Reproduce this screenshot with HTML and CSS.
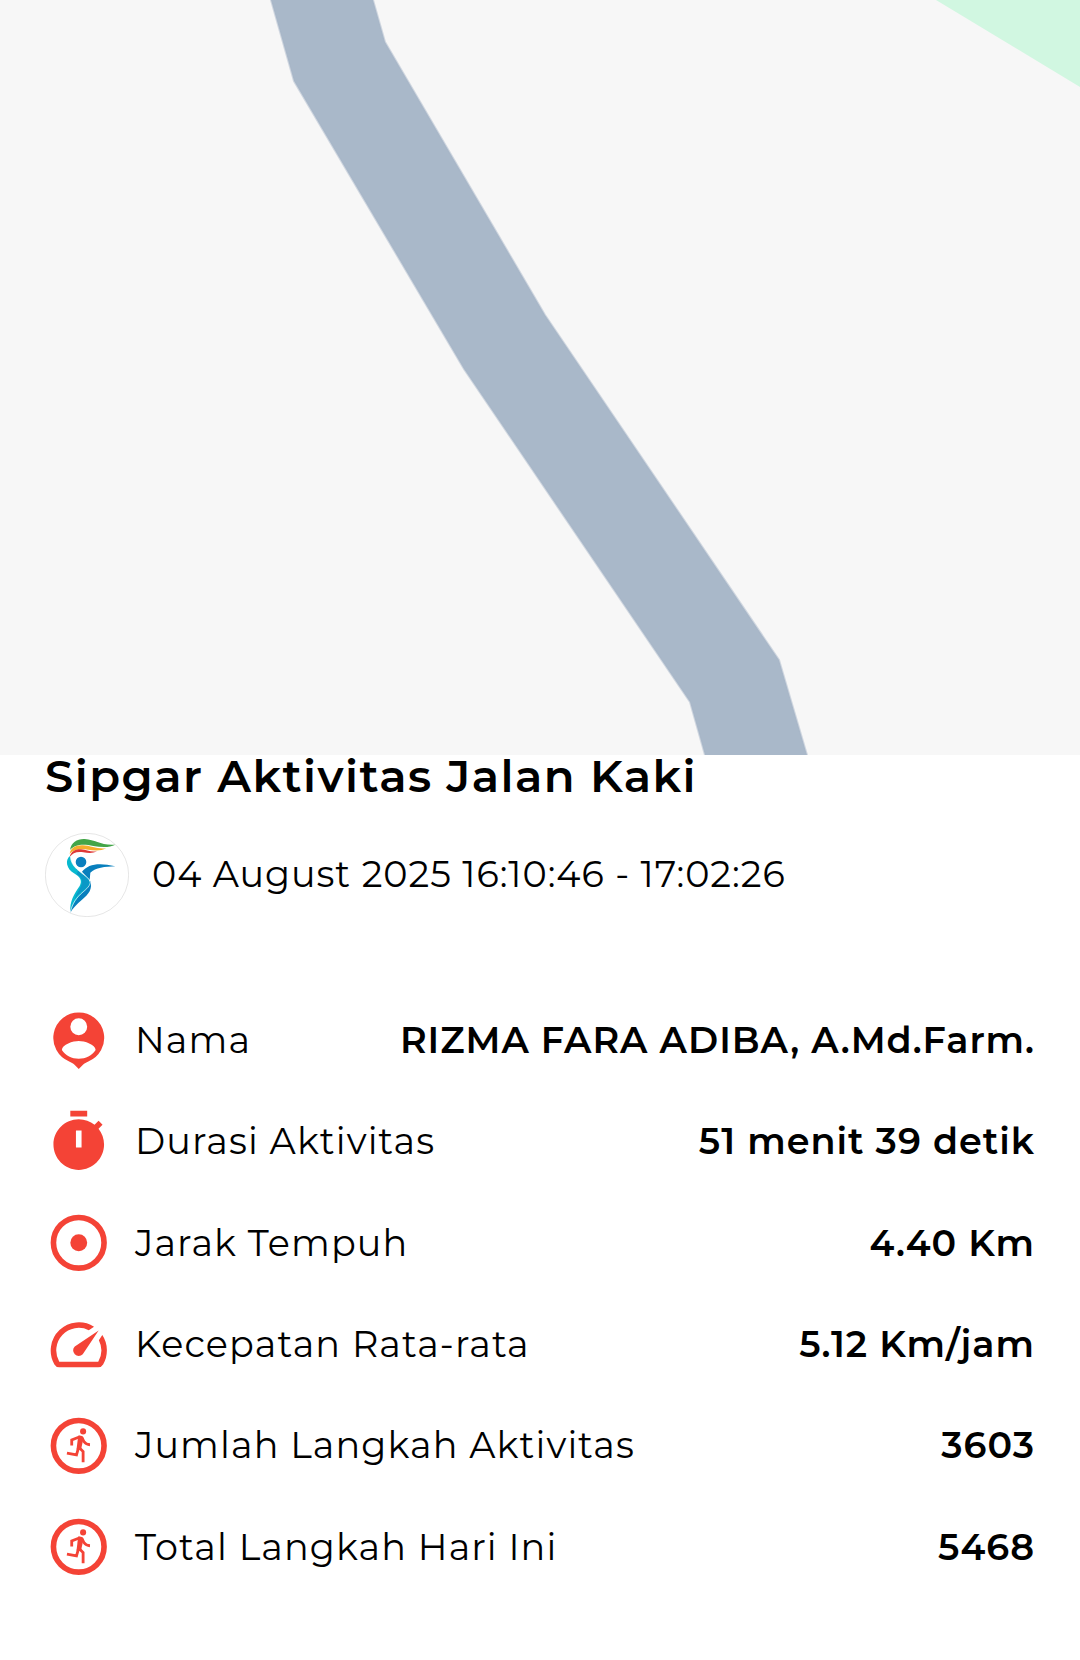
FILE: index.html
```html
<!DOCTYPE html>
<html lang="id">
<head>
    <meta charset="UTF-8">
    <meta name="viewport" content="width=device-width, initial-scale=1.0">
    <title>Sipgar Aktivitas Jalan Kaki</title>
    <link rel="stylesheet" href="styles.css">
</head>
<body>
    <svg class="map" viewBox="0 0 1080 755">
        <polygon class="park" points="936,0 1080,87 1080,0"/>
        <polygon class="road" points="271,0 294,81 464,369 690,702 705,755 807,755 779,660 545,315 385,42 373,0"/>
    </svg>

    <main class="activity">
        <h1 class="title">Sipgar Aktivitas Jalan Kaki</h1>

        <div class="date-row">
            <svg class="logo" viewBox="45 39 252 252">
                <circle cx="171" cy="165" r="125" fill="#fff" stroke="#ccc" stroke-width="1.5"/>
                <path fill="#43a548" d="M120 90C124 66 142 56 164 57C197 59 211 77 256 74C237 84 212 81 190 78C160 71 134 73 120 90Z"/>
                <path fill="#f5ae2d" d="M119 102C121 84 137 75 158 76C184 77 200 88 229 85C211 94 193 92 174 89C151 86 131 88 119 102Z"/>
                <path fill="#df3936" d="M119 112C122 94 137 87 153 88C170 89 180 97 201 94C188 101 174 99 160 97C141 94 127 99 119 112Z"/>
                <circle cx="153" cy="126" r="16" fill="#0b7fbe"/>
                <path fill="#087fbd" d="M156 155C174 132 207 127 256 139C224 140 197 143 181 158L179 180C171 171 163 163 156 155Z"/>
                <path fill="#087fbd" d="M181 182C188 207 177 221 156 239C140 252 129 264 121 278C124 242 146 220 163 205Z"/>
                <path fill="#08b9cf" d="M121 107C103 120 110 147 132 160C151 171 158 183 149 198C132 222 119 244 121 276C129 246 151 222 168 207C182 194 184 183 170 171C147 150 123 142 121 107Z"/>
                <path fill="#0a98c6" d="M140 163C156 173 160 184 152 200C147 211 138 222 134 237C145 222 158 214 168 205C182 192 182 182 168 170C159 162 151 157 144 152Z"/>
                <path fill="none" stroke="#fff" stroke-width="2" d="M121 108C123 145 154 154 178 179C186 190 176 202 159 216C140 232 127 249 121 277"/>
            </svg>
            <span class="date">04 August 2025 16:10:46 - 17:02:26</span>
        </div>

        <div class="stats">
            <div class="stat">
                <svg class="icon" viewBox="0 0 24 24">
                    <path fill-rule="evenodd" d="M12 2a9 9 0 0 0-3.4 17.35c.7.28 1.4.65 1.9 1.15L12 22l1.5-1.5c.5-.5 1.2-.87 1.9-1.15A9 9 0 0 0 12 2zm0 2a3 3 0 1 1 0 6 3 3 0 0 1 0-6zm0 14.4c-2.5 0-4.7-1.1-6-3.1.05-2 4-3.2 6-3.2s5.95 1.2 6 3.2c-1.3 2-3.5 3.1-6 3.1z"/>
                </svg>
                <span class="label">Nama</span>
                <span class="value">RIZMA FARA ADIBA, A.Md.Farm.</span>
            </div>
            <div class="stat">
                <svg class="icon" viewBox="0 0 24 24">
                    <path fill-rule="evenodd" d="M15 1H9v2h6V1zm-4 13h2V8h-2v6zm8.03-6.61l1.42-1.42c-.43-.51-.9-.99-1.41-1.41l-1.42 1.42C16.07 4.74 14.12 4 12 4c-4.97 0-9 4.03-9 9s4.02 9 9 9 9-4.03 9-9c0-2.12-.74-4.07-1.97-5.61z"/>
                </svg>
                <span class="label">Durasi Aktivitas</span>
                <span class="value">51 menit 39 detik</span>
            </div>
            <div class="stat">
                <svg class="icon" viewBox="0 0 24 24">
                    <circle class="ring" cx="12" cy="12" r="9"/>
                    <circle cx="12" cy="12" r="3"/>
                </svg>
                <span class="label">Jarak Tempuh</span>
                <span class="value">4.40 Km</span>
            </div>
            <div class="stat">
                <svg class="icon" viewBox="0 0 24 24">
                    <path d="M20.38 8.57l-1.23 1.85a8 8 0 0 1-.22 7.58H5.07A8 8 0 0 1 15.58 6.85l1.85-1.23A10 10 0 0 0 3.35 19a2 2 0 0 0 1.72 1h13.85a2 2 0 0 0 1.74-1 10 10 0 0 0-.27-10.44z"/>
                    <path d="M10.59 15.41a2 2 0 0 0 2.83 0l5.66-8.49-8.49 5.66a2 2 0 0 0 0 2.83z"/>
                </svg>
                <span class="label">Kecepatan Rata-rata</span>
                <span class="value">5.12 Km/jam</span>
            </div>
            <div class="stat">
                <svg class="icon" viewBox="0 0 24 24">
                    <circle class="ring" cx="12" cy="12" r="9"/>
                    <circle cx="13.55" cy="6.9" r="1.08"/>
                    <path class="limb" d="M9.5 11.9V9.95L12.4 8.8M13 8.9l.9 1.7q.7 1 2.1 1.05M12.2 12.7l1.35 1.35v3.8M12 12.4l-.8 2.85-3.4-.65"/>
                    <path d="M11.8 8.4q1.3-.3 1.9.8l-.9 4.2-1.6-.1z"/>
                </svg>
                <span class="label">Jumlah Langkah Aktivitas</span>
                <span class="value">3603</span>
            </div>
            <div class="stat">
                <svg class="icon" viewBox="0 0 24 24">
                    <circle class="ring" cx="12" cy="12" r="9"/>
                    <circle cx="13.55" cy="6.9" r="1.08"/>
                    <path class="limb" d="M9.5 11.9V9.95L12.4 8.8M13 8.9l.9 1.7q.7 1 2.1 1.05M12.2 12.7l1.35 1.35v3.8M12 12.4l-.8 2.85-3.4-.65"/>
                    <path d="M11.8 8.4q1.3-.3 1.9.8l-.9 4.2-1.6-.1z"/>
                </svg>
                <span class="label">Total Langkah Hari Ini</span>
                <span class="value">5468</span>
            </div>
        </div>
    </main>
</body>
</html>
```
FILE: styles.css
```css
body {
    margin: 0;
    background: #ffffff;
    color: #000000;
    font-family: Montserrat, Inter, sans-serif;
}

.map {
    display: block;
    width: 1080px;
    height: 755px;
    background: #f7f7f7;
}

.park {
    fill: #d1f7e1;
}

.road {
    fill: #a9b8c9;
    stroke: #a9b8c9;
    stroke-opacity: 0.5;
    stroke-width: 2;
}

.activity {
    padding: 0 45px;
}

.title {
    margin: 0;
    height: 78px;
    font-size: 45px;
    line-height: 42px;
    font-weight: 600;
    letter-spacing: 1.47px;
    white-space: nowrap;
}

.date-row {
    display: flex;
    align-items: center;
    gap: 23px;
    height: 84px;
}

.logo {
    width: 84px;
    height: 84px;
}

.date {
    font-size: 36.56px;
    line-height: 44px;
    font-weight: 400;
    letter-spacing: 0.95px;
    padding-bottom: 2px;
    white-space: nowrap;
}

.stats {
    display: grid;
    grid-auto-rows: 101.3px;
    padding-top: 73px;
}

.stat {
    display: flex;
    align-items: center;
}

.icon {
    width: 67.5px;
    height: 67.5px;
    margin-right: 22.5px;
    fill: #f44336;
}

.ring {
    fill: none;
    stroke: #f44336;
    stroke-width: 2;
}

.limb {
    fill: none;
    stroke: #f44336;
    stroke-width: 1;
}

.label,
.value {
    font-size: 36.56px;
    line-height: 44px;
    padding-bottom: 1px;
    white-space: nowrap;
}

.label {
    font-weight: 400;
    letter-spacing: 1.12px;
}

.value {
    margin-left: auto;
    font-weight: 600;
    letter-spacing: 1px;
}
```
